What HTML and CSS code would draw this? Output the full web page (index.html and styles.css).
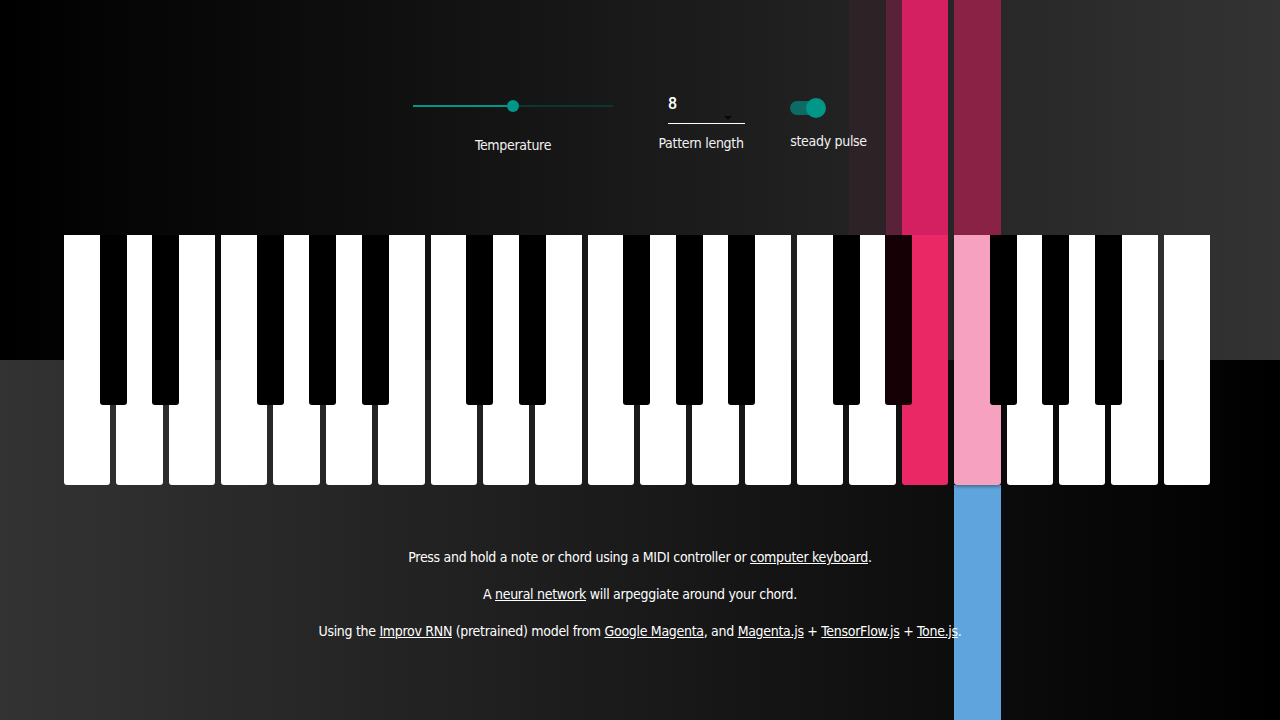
FILE: index.html
```html
<!DOCTYPE html>
<html>
<head>
<meta charset="utf-8">
<link rel="stylesheet" href="styles.css">
</head>
<body>
<div class="bars">
  <div class="bar bar-d"></div>
  <div class="bar bar-ds"></div>
  <div class="bar bar-e"></div>
  <div class="bar bar-f"></div>
  <div class="bar bar-blue"></div>
</div>
<div class="controls">
  <div class="ctl ctl-temp">
    <div class="slider">
      <div class="track-on"></div>
      <div class="thumb"></div>
      <div class="track-off"></div>
    </div>
    <div class="label">Temperature</div>
  </div>
  <div class="ctl ctl-len">
    <div class="select">
      <span class="value">8</span>
      <span class="arrow"></span>
    </div>
    <div class="label">Pattern length</div>
  </div>
  <div class="ctl ctl-pulse">
    <div class="toggle">
      <div class="toggle-track"></div>
      <div class="toggle-thumb"></div>
    </div>
    <div class="label">steady pulse</div>
  </div>
</div>
<div class="keyboard">
  <div class="white"><div class="black"></div></div>
  <div class="white"><div class="black"></div></div>
  <div class="white"></div>
  <div class="white"><div class="black"></div></div>
  <div class="white"><div class="black"></div></div>
  <div class="white"><div class="black"></div></div>
  <div class="white"></div>
  <div class="white"><div class="black"></div></div>
  <div class="white"><div class="black"></div></div>
  <div class="white"></div>
  <div class="white"><div class="black"></div></div>
  <div class="white"><div class="black"></div></div>
  <div class="white"><div class="black"></div></div>
  <div class="white"></div>
  <div class="white"><div class="black"></div></div>
  <div class="white"><div class="black held"></div></div>
  <div class="white red"></div>
  <div class="white pink"><div class="black"></div></div>
  <div class="white"><div class="black"></div></div>
  <div class="white"><div class="black"></div></div>
  <div class="white"></div>
  <div class="white"></div>
</div>
<div class="info">
  <p>Press and hold a note or chord using a MIDI controller or <a href="#">computer keyboard</a>.</p>
  <p>A <a href="#">neural network</a> will arpeggiate around your chord.</p>
  <p>Using the <a href="#">Improv RNN</a> (pretrained) model from <a href="#">Google Magenta</a>, and <a href="#">Magenta.js</a> + <a href="#">TensorFlow.js</a> + <a href="#">Tone.js</a>.</p>
</div>
</body>
</html>
```
FILE: styles.css
```css
html, body {
  margin: 0;
  padding: 0;
  width: 1280px;
  height: 720px;
  overflow: hidden;
}
body {
  position: relative;
  font-family: "DejaVu Sans Condensed", "DejaVu Sans", sans-serif;
  font-stretch: condensed;
  font-size: 14px;
  letter-spacing: -0.3px;
  color: #fff;
  background:
    linear-gradient(to right, #000 0%, #333 100%) top / 100% 50% no-repeat,
    linear-gradient(to right, #333 0%, #000 100%) bottom / 100% 50% no-repeat;
}

/* note visualisation bars */
.bars {
  position: absolute;
  inset: 0;
  pointer-events: none;
}
.bar {
  position: absolute;
  top: 0;
  height: 235px;
}
.bar-d { left: 849px; width: 47px; background: #2d2326; }
.bar-ds { left: 886px; width: 26px; background: #5a2238; }
.bar-e { left: 902px; width: 46px; background: #d42060; }
.bar-f { left: 954px; width: 47px; background: #8a2246; }
.bar-blue { left: 954px; width: 47px; top: 485px; height: 235px; background: #5fa4dc; }

/* controls */
.controls {
  position: relative;
  display: flex;
  justify-content: center;
  align-items: flex-start;
  gap: 44px;
  height: 235px;
  box-sizing: border-box;
  padding-top: 90px;
}
.ctl {
  display: flex;
  flex-direction: column;
  align-items: center;
}
.ctl-temp { width: 200px; }
.ctl-len { width: 88px; }
.ctl-pulse { width: 77px; margin-left: 1px; }
.label {
  font-size: 14px;
  line-height: 20px;
  white-space: nowrap;
  color: #f2f2f2;
}
.slider {
  display: flex;
  align-items: center;
  width: 200px;
  height: 32px;
}
.track-on { width: 94px; height: 2px; background: #009688; }
.thumb {
  width: 12px; height: 12px; border-radius: 50%;
  background: #009688;
}
.track-off { flex: 1; height: 2px; background: #0d3532; }
.ctl-temp .label { margin-top: 13px; }

.select {
  position: relative;
  align-self: flex-end;
  width: 77px;
  height: 34px;
  border-bottom: 1.5px solid #fff;
  box-sizing: border-box;
}
.value {
  position: absolute;
  left: 0;
  top: 4px;
  font-family: Roboto, "Liberation Sans", sans-serif;
  font-stretch: normal;
  font-size: 16px;
  font-weight: 500;
  letter-spacing: 0;
  line-height: 20px;
}
.arrow {
  position: absolute;
  left: 56px;
  top: 26px;
  width: 0; height: 0;
  border-left: 4px solid transparent;
  border-right: 4px solid transparent;
  border-top: 4px solid #080808;
}
.ctl-len .label { margin-top: 9px; }

.toggle {
  position: relative;
  align-self: flex-start;
  width: 36px;
  height: 36px;
}
.toggle-track {
  position: absolute;
  left: 0; top: 11px;
  width: 32px; height: 14px;
  border-radius: 7px;
  background: #0c6b63;
}
.toggle-thumb {
  position: absolute;
  left: 16px; top: 8px;
  width: 20px; height: 20px;
  border-radius: 50%;
  background: #009688;
}
.ctl-pulse .label { margin-top: 5px; }

/* keyboard */
.keyboard {
  position: relative;
  display: grid;
  grid-template-columns: repeat(22, 1fr);
  column-gap: 6px;
  width: 1146px;
  height: 250px;
  margin: 0 0 0 64px;
}
.white {
  position: relative;
  background: #fff;
  border-radius: 0 0 3px 3px;
}
.white.red { background: #ea2866; }
.white.pink { background: #f5a1bf; box-shadow: 0 2px 3px rgba(0,0,0,0.3); }
.black {
  position: absolute;
  z-index: 2;
  top: 0;
  right: -16.5px;
  width: 27px;
  height: 170px;
  background: #000;
  border-radius: 0 0 3px 3px;
}
.black.held { background: #140005; }

/* info text */
.info {
  position: relative;
  margin-top: 62px;
  text-align: center;
}
.info p {
  margin: 0 0 17px;
  line-height: 20px;
}
.info a {
  color: #fff;
  text-decoration: underline;
}
```
